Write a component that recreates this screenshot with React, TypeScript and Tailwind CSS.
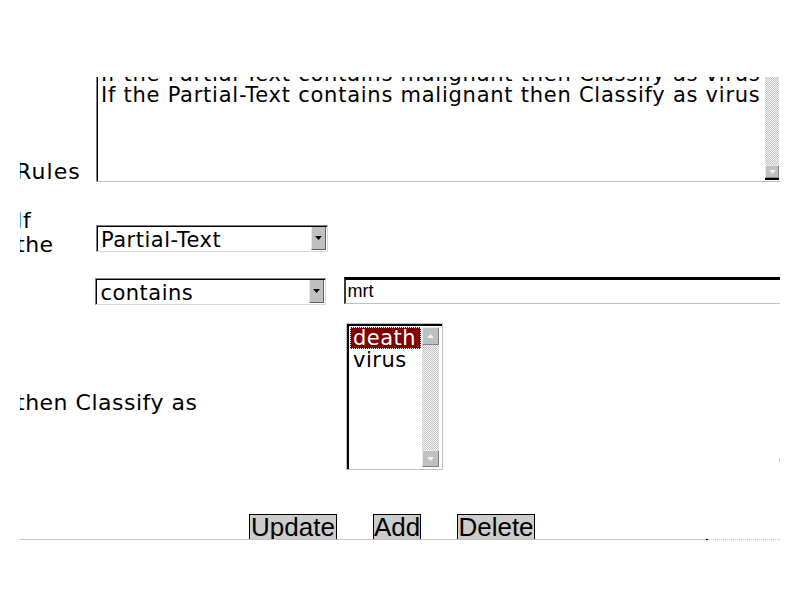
import React from "react";

const dv = "font-['DejaVu_Sans',Verdana,sans-serif]";
const checker =
  "bg-[image:repeating-conic-gradient(#c4c4c4_0_25%,#f4f4f4_0_50%)] bg-[length:2px_2px]";

function Arrow({ up = false, color = "#000" }: { up?: boolean; color?: string }) {
  return (
    <svg width="7" height="4" viewBox="0 0 7 4">
      <path d={up ? "M0 4h7L3.5 0z" : "M0 0h7L3.5 4z"} fill={color} />
    </svg>
  );
}

function ScrollBtn({ up = false, h, arrow = "#f2f2f2" }: { up?: boolean; h: string; arrow?: string }) {
  return (
    <div
      className={`${h} flex items-center justify-center bg-[#c0c0c0] border border-t-[#e8e8e8] border-l-[#e8e8e8] border-r-[#808080] border-b-[#808080]`}
    >
      <Arrow up={up} color={arrow} />
    </div>
  );
}

function Select({ value }: { value: string }) {
  return (
    <div className="w-[232px] h-[27px] flex bg-white border border-[#808080] border-r-[#d8d8d8] border-b-[#d8d8d8] shadow-[inset_1px_1px_0_#000]">
      <div className={`flex-1 pl-[4px] pt-[2px] text-[21px] leading-[24px] tracking-[0.5px] text-black ${dv}`}>
        {value}
      </div>
      <div className="w-[15px] mt-[1px] mb-[1px] mr-[1px] flex items-center justify-center bg-[#c0c0c0] border-l border-l-[#e8e8e8] border-r border-r-[#606060] border-b border-b-[#606060]">
        <Arrow color="#000" />
      </div>
    </div>
  );
}

function Label({ children, className = "" }: { children: React.ReactNode; className?: string }) {
  return (
    <div className={`-ml-[4px] text-[22px] leading-[24px] tracking-[0.5px] text-black ${dv} ${className}`}>
      {children}
    </div>
  );
}

function Btn({ label, w }: { label: string; w: string }) {
  return (
    <div
      className={`${w} h-[27px] flex justify-center bg-[#cccccc] border-t border-l border-r border-black text-[26px] leading-[24px] text-black font-['Liberation_Sans',Arial,sans-serif]`}
    >
      {label}
    </div>
  );
}

export default function App() {
  const rule = "If the Partial-Text contains malignant then Classify as virus";
  return (
    <div className="w-[800px] h-[600px] bg-white pt-[77px] pl-[20px]">
      <div className="w-[760px] h-[462px] overflow-hidden">
        {/* Rules */}
        <div className="flex h-[105px]">
          <Label className="w-[80px] mt-[83px] tracking-[1.1px]">Rules</Label>
          <div className="w-[684px] h-[105px] flex border-l border-l-[#808080] border-b border-b-[#c0c0c0] shadow-[inset_1px_0_0_#000]">
            <div className={`flex-1 overflow-hidden pl-[4px] text-[21px] leading-[21px] tracking-[0.75px] text-black whitespace-nowrap ${dv}`}>
              <div className="-mt-[13px]">{rule}</div>
              <div>{rule}</div>
            </div>
            <div className="w-[14px] mr-[1px] flex flex-col pb-[1px]">
              <div className={`flex-1 ${checker}`} />
              <ScrollBtn h="h-[13px]" arrow="#eeeeee" />
              <div className="h-[2px] bg-black" />
            </div>
          </div>
        </div>

        {/* If the */}
        <div className="flex h-[96px]">
          <Label className="w-[80px] mt-[27px]">
            If
            <br />
            the
          </Label>
          <div className="mt-[43px]">
            <Select value="Partial-Text" />
          </div>
        </div>

        {/* operator + value */}
        <div className="flex h-[45px]">
          <div className="w-[76px]" />
          <Select value="contains" />
          <div className="ml-[18px] -mt-[1px] w-[440px] h-[27px] bg-white border-t-[3px] border-t-black border-l-2 border-l-[#3a3a3a] border-b border-b-[#c0c0c0] pl-[2px] pt-[1px] text-[18px] leading-[20px] text-black font-['Liberation_Sans',Arial,sans-serif]">
            mrt
          </div>
        </div>

        {/* then classify as */}
        <div className="flex h-[191px]">
          <Label className="w-[330px] mt-[68px]">then Classify as</Label>
          <div className="w-[97px] h-[147px] flex bg-white border border-[#c0c0c0] shadow-[inset_2px_2px_0_#000] pl-[3px] pt-[3px] pr-[3px] pb-[2px]">
            <div className={`w-[71px] text-[21px] leading-[22px] tracking-[0.5px] ${dv}`}>
              <div className="bg-[#800000] text-white pl-[3px] outline-1 outline-dotted outline-offset-[-1px] outline-[#f0f0f0]">
                death
              </div>
              <div className="pl-[3px] text-black">virus</div>
            </div>
            <div className="ml-[1px] w-[17px] flex flex-col">
              <ScrollBtn up h="h-[18px]" />
              <div className={`flex-1 ${checker}`} />
              <ScrollBtn h="h-[17px]" />
            </div>
          </div>
          <div className="ml-[336px] mt-[135px] w-[1px] h-[5px] bg-[#cccccc]" />
        </div>

        {/* buttons */}
        <div className="flex pl-[229px] gap-[36px]">
          <Btn label="Update" w="w-[88px]" />
          <Btn label="Add" w="w-[48px]" />
          <Btn label="Delete" w="w-[78px]" />
        </div>
      </div>
      <div className="w-[760px] flex">
        <div className="w-[686px] h-[1px] bg-[#c4c4c4]" />
        <div className="w-[2px] h-[1px] bg-black" />
        <div className="flex-1 h-[1px] border-t border-dotted border-[#c4c4c4]" />
      </div>
    </div>
  );
}
